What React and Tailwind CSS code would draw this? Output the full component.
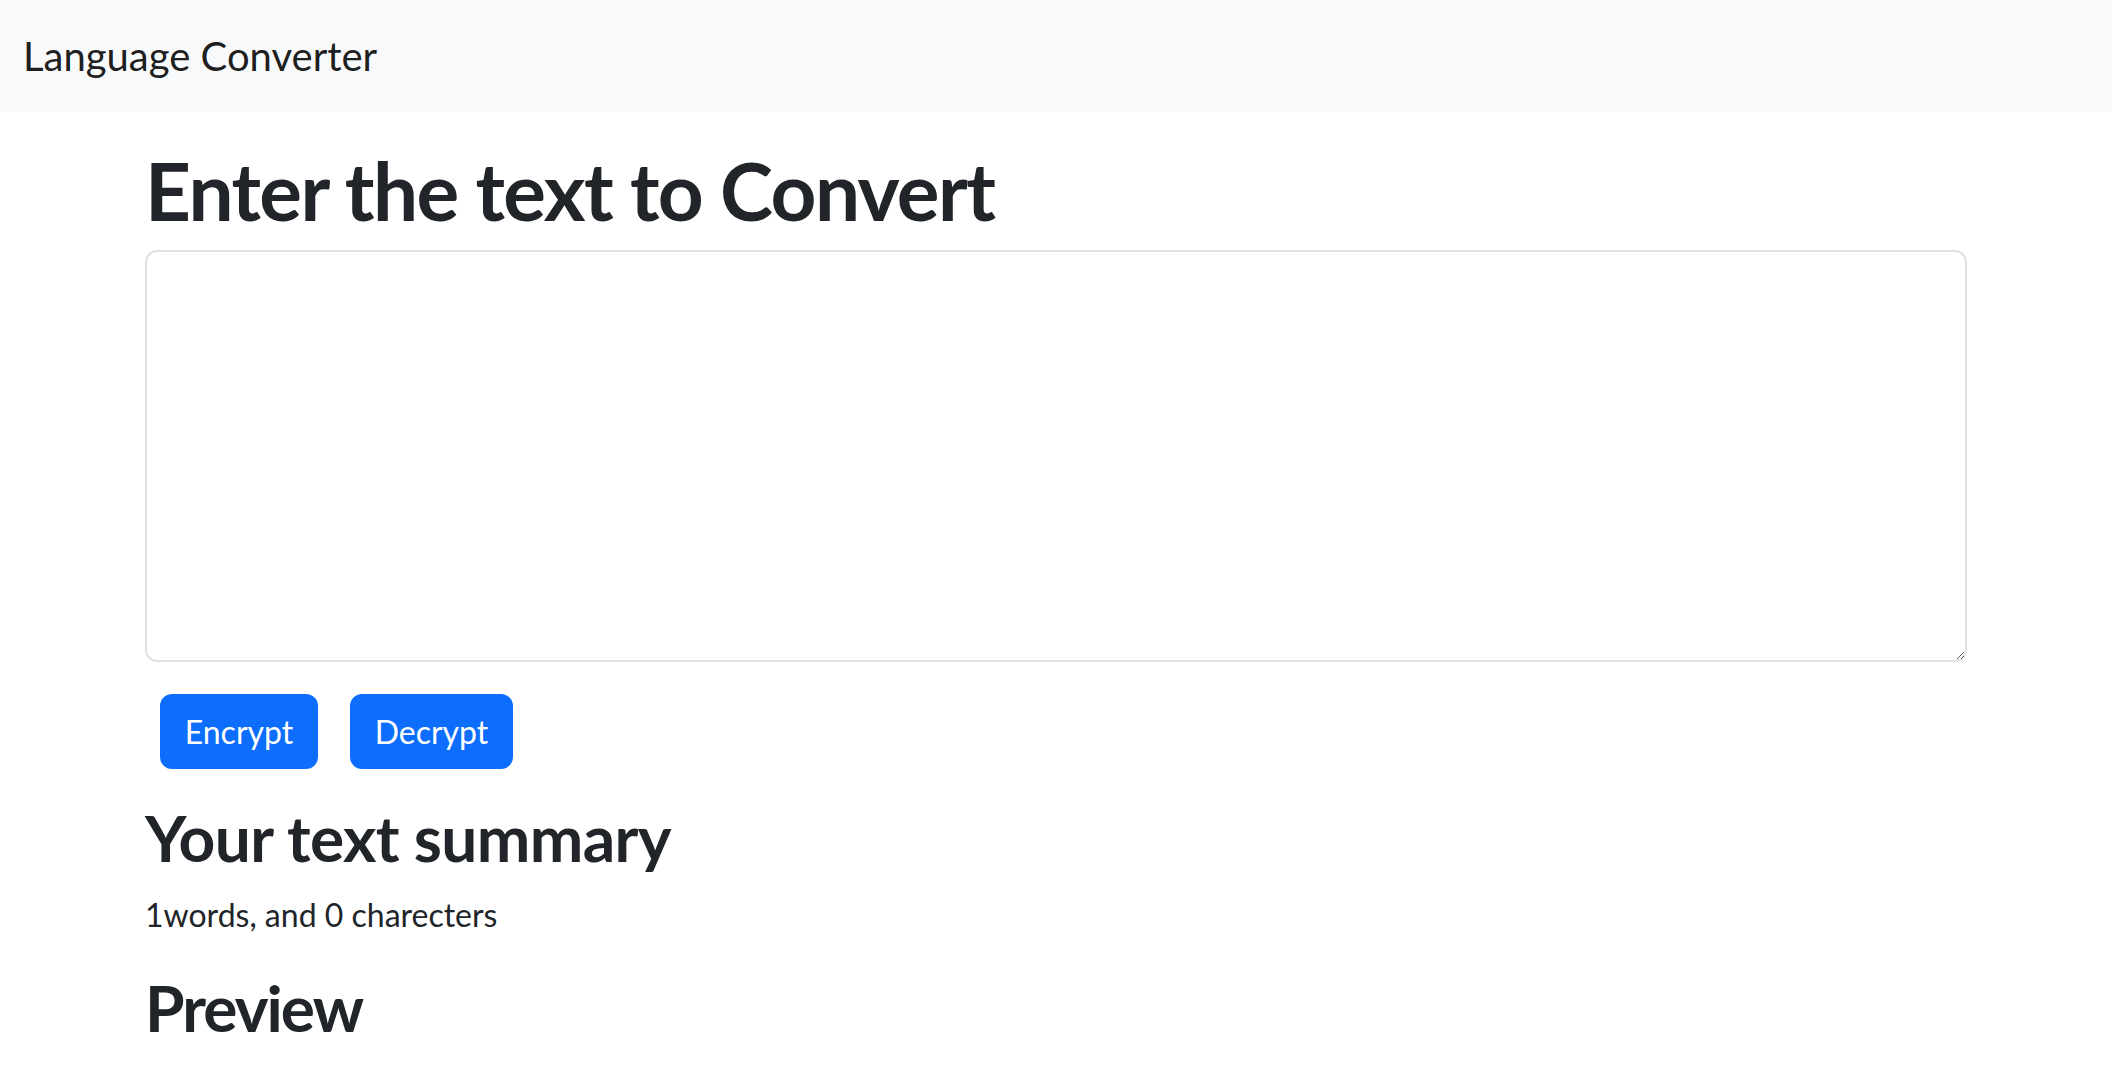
import React from "react";

export default function App() {
  return (
    <div className="min-h-[1078px] bg-white text-[#212529] font-['Lato',sans-serif]">
      <nav className="h-[112px] bg-[#f8f9fa] flex items-center pl-[23px]">
        <span className="text-[40px] leading-[60px] text-black/90 whitespace-nowrap">Language Converter</span>
      </nav>
      <main className="px-[145px]">
        <h1 className="mt-[30px] mb-[12px] text-[80px] leading-[96px] font-bold tracking-[-0.02em] whitespace-nowrap">Enter the text to Convert</h1>
        <textarea className="block w-full h-[412px] border-2 border-[#dee2e6] rounded-[12px] px-[24px] py-[12px] text-[32px] outline-none bg-white" />
        <div className="flex gap-[32px] mt-[32px] pl-[15px]">
          <button className="w-[158px] h-[75px] rounded-[12px] bg-[#0d6efd] text-white text-[32px] leading-[48px] flex items-center justify-center">Encrypt</button>
          <button className="w-[163px] h-[75px] rounded-[12px] bg-[#0d6efd] text-white text-[32px] leading-[48px] flex items-center justify-center">Decrypt</button>
        </div>
        <h2 className="mt-[30px] text-[64px] leading-[77px] font-bold tracking-[-0.01em] whitespace-nowrap">Your text summary</h2>
        <p className="mt-[15px] text-[32px] leading-[48px] whitespace-nowrap">1words, and 0 charecters</p>
        <h2 className="mt-[30px] text-[64px] leading-[77px] font-bold tracking-[-0.03em] whitespace-nowrap">Preview</h2>
      </main>
    </div>
  );
}
